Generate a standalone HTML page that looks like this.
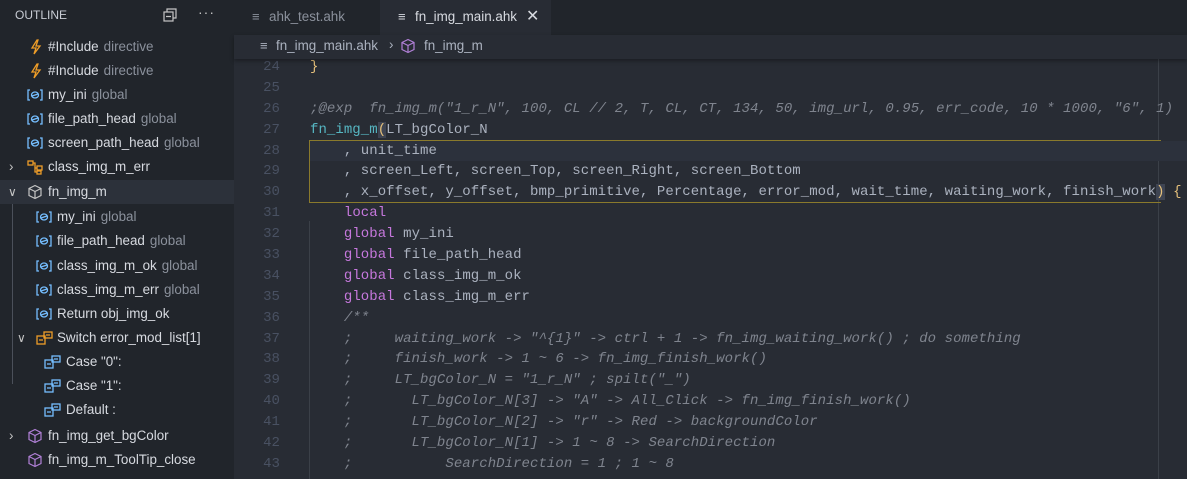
<!DOCTYPE html>
<html><head><meta charset="utf-8"><style>
*{margin:0;padding:0;box-sizing:border-box}
body{width:1187px;height:479px;overflow:hidden;background:#282c34;font-family:"Liberation Sans",sans-serif;position:relative}
#side{position:absolute;left:0;top:0;width:234px;height:479px;background:#21252b}
.hdr{position:absolute;left:15px;top:8px;font-size:12px;color:#c8ccd4}
.row{position:absolute;left:0;width:234px;height:24px;font-size:13.4px;color:#d7dae0;line-height:24px;white-space:nowrap}
.row .d{color:#8b919c;margin-left:5px}
.row svg{position:absolute;top:4px}
.row span.t{position:absolute}
.sel{background:#2c313a}
#tabs{position:absolute;left:234px;top:0;right:0;height:35px;background:#21252b}
.tab{position:absolute;top:0;height:35px;font-size:13.4px;line-height:33px;white-space:nowrap}
#crumb{position:absolute;left:234px;top:35px;right:0;height:24px;background:#282c34;font-size:13.4px;color:#abb2bf;box-shadow:0 2px 4px rgba(0,0,0,.35);z-index:2}
#code{position:absolute;left:234px;top:57px;right:0;font-family:"Liberation Mono",monospace;font-size:14px;letter-spacing:0.06px}
.l{height:20.9px;line-height:20.9px;white-space:pre;position:relative}
.n{position:absolute;left:0;width:46px;text-align:right;color:#495162}
.c{position:absolute;left:76px;color:#abb2bf}
.cm{color:#7f848e;font-style:italic}
.k{color:#c678dd}
.f{color:#56b6c2}
.y{color:#e5c07b}
</style></head><body>
<div id="side">
<div class="hdr">OUTLINE</div>
<svg style="position:absolute;left:163px;top:8px" width="14" height="14" viewBox="0 0 14 14" fill="none" stroke="#c5c5c5" stroke-width="1.2"><rect x="1" y="4" width="9" height="9"/><path d="M4 4V1h9v9h-3M3 8.5h5"/></svg>
<div style="position:absolute;left:198px;top:4px;color:#c5c5c5;font-size:14px;letter-spacing:1px">···</div>

<div class="row" style="top:35px"><svg style="left:29px" width="14" height="16" viewBox="0 0 14 16"><path d="M8 1L3 9h4l-2 6 6-8H7l2-6z" fill="none" stroke="#ee9d28" stroke-width="1.3"/></svg><span class="t" style="left:48px">#Include<span class="d">directive</span></span></div>
<div class="row" style="top:59px"><svg style="left:29px" width="14" height="16" viewBox="0 0 14 16"><path d="M8 1L3 9h4l-2 6 6-8H7l2-6z" fill="none" stroke="#ee9d28" stroke-width="1.3"/></svg><span class="t" style="left:48px">#Include<span class="d">directive</span></span></div>
<div class="row" style="top:83px"><svg style="left:26px" width="18" height="16"><use href="#var"/></svg><span class="t" style="left:48px">my_ini<span class="d">global</span></span></div>
<div class="row" style="top:107px"><svg style="left:26px" width="18" height="16"><use href="#var"/></svg><span class="t" style="left:48px">file_path_head<span class="d">global</span></span></div>
<div class="row" style="top:131px"><svg style="left:26px" width="18" height="16"><use href="#var"/></svg><span class="t" style="left:48px">screen_path_head<span class="d">global</span></span></div>
<div class="row" style="top:155px"><span class="t" style="left:9px;color:#c5c5c5">›</span><svg style="left:27px" width="16" height="16" viewBox="0 0 16 16" fill="none" stroke="#ee9d28" stroke-width="1.3"><rect x="1" y="2" width="5" height="4"/><rect x="10" y="7" width="5" height="4"/><rect x="10" y="12" width="4" height="3"/><path d="M6 4h2v9h2M8 9h2"/></svg><span class="t" style="left:48px">class_img_m_err</span></div>
<div class="row sel" style="top:180px"><span class="t" style="left:8px;color:#c5c5c5;font-size:12px">∨</span><svg style="left:27px" width="16" height="16"><use href="#cube" stroke="#c5c5c5"/></svg><span class="t" style="left:48px">fn_img_m</span></div>
<div style="position:absolute;left:12px;top:204px;width:1px;height:180px;background:#4b505a"></div>
<div class="row" style="top:205px"><svg style="left:35px" width="18" height="16"><use href="#var"/></svg><span class="t" style="left:57px">my_ini<span class="d">global</span></span></div>
<div class="row" style="top:229px"><svg style="left:35px" width="18" height="16"><use href="#var"/></svg><span class="t" style="left:57px">file_path_head<span class="d">global</span></span></div>
<div class="row" style="top:254px"><svg style="left:35px" width="18" height="16"><use href="#var"/></svg><span class="t" style="left:57px">class_img_m_ok<span class="d">global</span></span></div>
<div class="row" style="top:278px"><svg style="left:35px" width="18" height="16"><use href="#var"/></svg><span class="t" style="left:57px">class_img_m_err<span class="d">global</span></span></div>
<div class="row" style="top:302px"><svg style="left:35px" width="18" height="16"><use href="#var"/></svg><span class="t" style="left:57px">Return obj_img_ok</span></div>
<div class="row" style="top:326px"><span class="t" style="left:17px;color:#c5c5c5;font-size:12px">∨</span><svg style="left:36px" width="18" height="16"><use href="#enum" stroke="#ee9d28"/></svg><span class="t" style="left:57px">Switch error_mod_list[1]</span></div>
<div class="row" style="top:350px"><svg style="left:44px" width="18" height="16"><use href="#enum" stroke="#75beff"/></svg><span class="t" style="left:66px">Case "0":</span></div>
<div class="row" style="top:374px"><svg style="left:44px" width="18" height="16"><use href="#enum" stroke="#75beff"/></svg><span class="t" style="left:66px">Case "1":</span></div>
<div class="row" style="top:398px"><svg style="left:44px" width="18" height="16"><use href="#enum" stroke="#75beff"/></svg><span class="t" style="left:66px">Default :</span></div>
<div class="row" style="top:424px"><span class="t" style="left:9px;color:#c5c5c5">›</span><svg style="left:27px" width="16" height="16"><use href="#cube" stroke="#b180d7"/></svg><span class="t" style="left:48px">fn_img_get_bgColor</span></div>
<div class="row" style="top:448px"><svg style="left:27px" width="16" height="16"><use href="#cube" stroke="#b180d7"/></svg><span class="t" style="left:48px">fn_img_m_ToolTip_close</span></div>
</div>

<svg width="0" height="0" style="position:absolute"><defs>
<g id="var" fill="none" stroke="#75beff" stroke-width="1.3"><path d="M4 3H2v10h2M14 3h2v10h-2"/><ellipse cx="9" cy="8" rx="3.5" ry="3"/><path d="M6 9l6-2"/></g>
<g id="cube" fill="none" stroke-width="1.2"><path d="M8 1.5l6 3v7l-6 3-6-3v-7z M2 4.5l6 3 6-3 M8 7.5v7"/></g>
<g id="enum" fill="none" stroke-width="1.3"><rect x="1" y="6" width="8" height="8"/><rect x="8" y="2" width="8" height="6"/><path d="M3 10h4M10 5h4"/></g>
</defs></svg>

<div id="tabs">
<div class="tab" style="left:0;width:146px;color:#8b919c"><span style="position:absolute;left:18px;font-size:13px">≡</span><span style="position:absolute;left:35px">ahk_test.ahk</span></div>
<div class="tab" style="left:146px;width:171px;background:#282c34;color:#d7dae0"><span style="position:absolute;left:18px;font-size:13px">≡</span><span style="position:absolute;left:35px">fn_img_main.ahk</span><span style="position:absolute;left:146px;font-size:16px">✕</span></div>
</div>
<div id="crumb"><span style="position:absolute;left:26px;top:3px;font-size:13px">≡</span><span style="position:absolute;left:42px;top:3px">fn_img_main.ahk</span><span style="position:absolute;left:155px;top:2px">›</span><svg style="position:absolute;left:166px;top:3px" width="16" height="16"><use href="#cube" stroke="#b180d7"/></svg><span style="position:absolute;left:190px;top:3px">fn_img_m</span></div>

<div style="position:absolute;left:1158px;top:57px;width:1px;height:422px;background:#3b4048"></div>
<div style="position:absolute;left:309px;top:221px;width:1px;height:258px;background:#3b4048"></div>
<div style="position:absolute;left:309px;top:140px;width:852px;height:63px;border:1px solid #8a7a2c;border-right:none"></div>
<div style="position:absolute;left:310px;top:141px;width:877px;height:20px;background:#2c313c"></div>

<div id="code">
<div class="l"><span class="n">24</span><span class="c"><span class="y">}</span></span></div>
<div class="l"><span class="n">25</span></div>
<div class="l"><span class="n">26</span><span class="c cm">;@exp  fn_img_m("1_r_N", 100, CL // 2, T, CL, CT, 134, 50, img_url, 0.95, err_code, 10 * 1000, "6", 1)</span></div>
<div class="l"><span class="n">27</span><span class="c"><span class="f">fn_img_m</span><span class="y" style="background:#3e4452">(</span>LT_bgColor_N</span></div>
<div class="l"><span class="n">28</span><span class="c">    , unit_time</span></div>
<div class="l"><span class="n">29</span><span class="c">    , screen_Left, screen_Top, screen_Right, screen_Bottom</span></div>
<div class="l"><span class="n">30</span><span class="c">    , x_offset, y_offset, bmp_primitive, Percentage, error_mod, wait_time, waiting_work, finish_work<span class="y" style="background:#3e4452">)</span> <span class="y">{</span></span></div>
<div class="l"><span class="n">31</span><span class="c">    <span class="k">local</span></span></div>
<div class="l"><span class="n">32</span><span class="c">    <span class="k">global</span> my_ini</span></div>
<div class="l"><span class="n">33</span><span class="c">    <span class="k">global</span> file_path_head</span></div>
<div class="l"><span class="n">34</span><span class="c">    <span class="k">global</span> class_img_m_ok</span></div>
<div class="l"><span class="n">35</span><span class="c">    <span class="k">global</span> class_img_m_err</span></div>
<div class="l"><span class="n">36</span><span class="c cm">    /**</span></div>
<div class="l"><span class="n">37</span><span class="c cm">    ;     waiting_work -> "^{1}" -> ctrl + 1 -> fn_img_waiting_work() ; do something</span></div>
<div class="l"><span class="n">38</span><span class="c cm">    ;     finish_work -> 1 ~ 6 -> fn_img_finish_work()</span></div>
<div class="l"><span class="n">39</span><span class="c cm">    ;     LT_bgColor_N = "1_r_N" ; spilt("_")</span></div>
<div class="l"><span class="n">40</span><span class="c cm">    ;       LT_bgColor_N[3] -> "A" -> All_Click -> fn_img_finish_work()</span></div>
<div class="l"><span class="n">41</span><span class="c cm">    ;       LT_bgColor_N[2] -> "r" -> Red -> backgroundColor</span></div>
<div class="l"><span class="n">42</span><span class="c cm">    ;       LT_bgColor_N[1] -> 1 ~ 8 -> SearchDirection</span></div>
<div class="l"><span class="n">43</span><span class="c cm">    ;           SearchDirection = 1 ; 1 ~ 8</span></div>
</div>
</body></html>
